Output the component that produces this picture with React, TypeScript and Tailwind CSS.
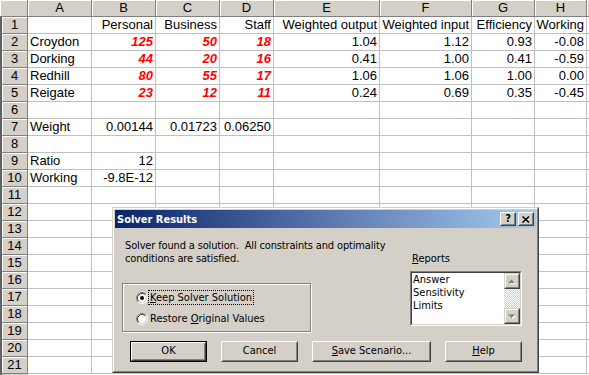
import React from "react";

type Cell = string | { t: string; red?: boolean };

const r = (t: string): Cell => ({ t, red: true });

const data: Cell[][] = [
  ["", "Personal", "Business", "Staff", "Weighted output", "Weighted input", "Efficiency", "Working"],
  ["Croydon", r("125"), r("50"), r("18"), "1.04", "1.12", "0.93", "-0.08"],
  ["Dorking", r("44"), r("20"), r("16"), "0.41", "1.00", "0.41", "-0.59"],
  ["Redhill", r("80"), r("55"), r("17"), "1.06", "1.06", "1.00", "0.00"],
  ["Reigate", r("23"), r("12"), r("11"), "0.24", "0.69", "0.35", "-0.45"],
  [],
  ["Weight", "0.00144", "0.01723", "0.06250"],
  [],
  ["Ratio", "12"],
  ["Working", "-9.8E-12"],
];

const letters = ["A", "B", "C", "D", "E", "F", "G", "H", ""];

function Radio({ checked }: { checked?: boolean }) {
  return (
    <svg width="12" height="12" viewBox="0 0 12 12" className="shrink-0">
      <circle cx="6" cy="6" r="4.5" fill="#fff" />
      <path d="M2.11 9.89 A5.5 5.5 0 0 1 9.89 2.11" stroke="#808080" fill="none" />
      <path d="M9.89 2.11 A5.5 5.5 0 0 1 2.11 9.89" stroke="#fff" fill="none" />
      <path d="M2.82 9.18 A4.5 4.5 0 0 1 9.18 2.82" stroke="#404040" fill="none" />
      <path d="M9.18 2.82 A4.5 4.5 0 0 1 2.82 9.18" stroke="#d4d0c8" fill="none" />
      {checked && <circle cx="6" cy="6" r="2" fill="#000" />}
    </svg>
  );
}

function Btn({ children, w, def }: { children: React.ReactNode; w: string; def?: boolean }) {
  const inner = (
    <div className="h-full border border-t-white border-l-white border-r-[#404040] border-b-[#404040]">
      <div className="h-full flex items-center justify-center border border-transparent border-r-[#808080] border-b-[#808080]">
        {children}
      </div>
    </div>
  );
  return (
    <div className={`h-[21px] ${w} ${def ? "border border-black" : ""}`}>{inner}</div>
  );
}

function TitleBtn({ children }: { children: React.ReactNode }) {
  return (
    <div className="w-[16px] h-[14px] bg-[#d4d0c8] border border-t-white border-l-white border-r-[#404040] border-b-[#404040]">
      <div className="h-full flex items-center justify-center border border-transparent border-r-[#808080] border-b-[#808080]">
        {children}
      </div>
    </div>
  );
}

function Arrow({ up }: { up?: boolean }) {
  return (
    <div className="w-[16px] h-[16px] bg-[#d4d0c8] border border-t-[#d4d0c8] border-l-[#d4d0c8] border-r-[#404040] border-b-[#404040]">
      <div className="h-full flex items-center justify-center border border-t-white border-l-white border-r-[#808080] border-b-[#808080]">
        <svg width="8" height="5" viewBox="0 0 8 5">
          {up ? (
            <>
              <path d="M1 5 L4 2 L7 5 Z" fill="#fff" transform="translate(1,0)" />
              <path d="M0 4 L3.5 0.5 L7 4 Z" fill="#808080" />
            </>
          ) : (
            <>
              <path d="M1 1 L4 4 L7 1 Z" fill="#fff" transform="translate(1,1)" />
              <path d="M0 0.5 L3.5 4 L7 0.5 Z" fill="#808080" />
            </>
          )}
        </svg>
      </div>
    </div>
  );
}

export default function App() {
  const rows = 21;
  return (
    <div className="relative w-[589px] h-[375px] overflow-hidden bg-white font-['Liberation_Sans',Arial,sans-serif] text-[13px] text-black">
      <div className="grid grid-cols-[28px_64px_64px_64px_54px_106px_92px_63px_52px_1fr] auto-rows-[17px]">
        <div className="bg-[#d4d0c8] border-r border-b border-[#808080] shadow-[inset_1px_1px_0_#fff]" />
        {letters.map((l, i) => (
          <div
            key={"h" + i}
            className="bg-[#d4d0c8] border-r border-b border-[#808080] shadow-[inset_1px_1px_0_#fff] flex items-center justify-center leading-[16px]"
          >
            {l}
          </div>
        ))}
        {Array.from({ length: rows }).map((_, ri) => {
          const row = data[ri] || [];
          return (
            <React.Fragment key={"r" + ri}>
              <div className="bg-[#d4d0c8] border-r border-b border-[#808080] border-l-2 border-l-[#606060] shadow-[inset_1px_1px_0_#fff] flex items-center justify-center leading-[16px]">
                {ri + 1}
              </div>
              {Array.from({ length: 9 }).map((__, ci) => {
                const c = row[ci];
                const text = c === undefined ? "" : typeof c === "string" ? c : c.t;
                const red = typeof c === "object" && c.red;
                return (
                  <div
                    key={ci}
                    className={`border-r border-b border-[#c0c0c0] flex items-center leading-[16px] whitespace-nowrap overflow-hidden ${
                      ci === 0 ? "justify-start pl-[2px]" : "justify-end pr-[2px]"
                    } ${red ? "font-bold italic text-[#ff0000]" : ""}`}
                  >
                    {text}
                  </div>
                );
              })}
            </React.Fragment>
          );
        })}
        <div className="bg-[#d4d0c8] border-l-2 border-l-[#606060]" />
      </div>

      {/* Solver Results dialog */}
      <div className="absolute left-[112px] top-[207px] w-[427px] h-[166px] bg-[#d4d0c8] border border-t-[#d4d0c8] border-l-[#d4d0c8] border-r-[#404040] border-b-[#404040] font-['DejaVu_Sans_Condensed','DejaVu_Sans',sans-serif] text-[11px]">
        <div className="h-full border border-t-white border-l-white border-r-[#808080] border-b-[#808080] p-px flex flex-col">
          <div className="h-[18px] shrink-0 flex items-center justify-between pl-[2px] pr-[2px] bg-[linear-gradient(to_right,#0a246a,#a6caf0)]">
            <span className="text-white font-bold leading-[13px]">Solver Results</span>
            <div className="flex gap-[2px]">
              <TitleBtn>
                <span className="font-bold text-[11px] leading-[10px] text-black">?</span>
              </TitleBtn>
              <TitleBtn>
                <svg width="8" height="7" viewBox="0 0 8 7">
                  <path d="M0.5 0.5 L7 6.5 M7 0.5 L0.5 6.5" stroke="#000" strokeWidth="1.5" />
                </svg>
              </TitleBtn>
            </div>
          </div>

          <div className="flex flex-col pl-[7px] pt-[11px]">
            <div className="flex">
              <div className="w-[288px] flex flex-col">
                <div className="pl-[3px] leading-[13px] whitespace-nowrap tracking-[-0.15px]">
                  <div>Solver found a solution.&nbsp; All constraints and optimality</div>
                  <div>conditions are satisfied.</div>
                </div>
                <div className="mt-[18px] w-[189px] h-[49px] border border-[#808080] shadow-[inset_1px_1px_0_#fff,1px_1px_0_#fff] pl-[13px] pt-[3px] flex flex-col">
                  <div className="h-[21px] flex items-center">
                    <Radio checked />
                    <span className="border border-dotted border-black px-px leading-[13px]">
                      <u className="underline-offset-1">K</u>eep Solver Solution
                    </span>
                  </div>
                  <div className="h-[21px] flex items-center">
                    <Radio />
                    <span className="border border-transparent px-px leading-[13px]">
                      Restore <u className="underline-offset-1">O</u>riginal Values
                    </span>
                  </div>
                </div>
              </div>
              <div className="flex flex-col">
                <div className="mt-[13px] pl-[2px] leading-[13px]">
                  <u className="underline-offset-1">R</u>eports
                </div>
                <div className="mt-[6px] w-[112px] h-[55px] border border-t-[#808080] border-l-[#808080] border-r-white border-b-white">
                  <div className="h-full flex border border-t-[#404040] border-l-[#404040] border-r-[#d4d0c8] border-b-[#d4d0c8] bg-white">
                    <div className="flex-1 pl-px leading-[13px]">
                      <div>Answer</div>
                      <div>Sensitivity</div>
                      <div>Limits</div>
                    </div>
                    <div className="w-[16px] flex flex-col">
                      <Arrow up />
                      <div className="flex-1 bg-[repeating-conic-gradient(#ffffff_0_25%,#d4d0c8_0_50%)] bg-[length:2px_2px]" />
                      <Arrow />
                    </div>
                  </div>
                </div>
              </div>
            </div>

            <div className="mt-[9px] ml-[8px] flex gap-[14px]">
              <Btn w="w-[77px]" def>
                OK
              </Btn>
              <Btn w="w-[77px]">Cancel</Btn>
              <Btn w="w-[119px]">
                <span>
                  <u className="underline-offset-1">S</u>ave Scenario...
                </span>
              </Btn>
              <Btn w="w-[77px]">
                <span>
                  <u className="underline-offset-1">H</u>elp
                </span>
              </Btn>
            </div>
          </div>
        </div>
      </div>
    </div>
  );
}
